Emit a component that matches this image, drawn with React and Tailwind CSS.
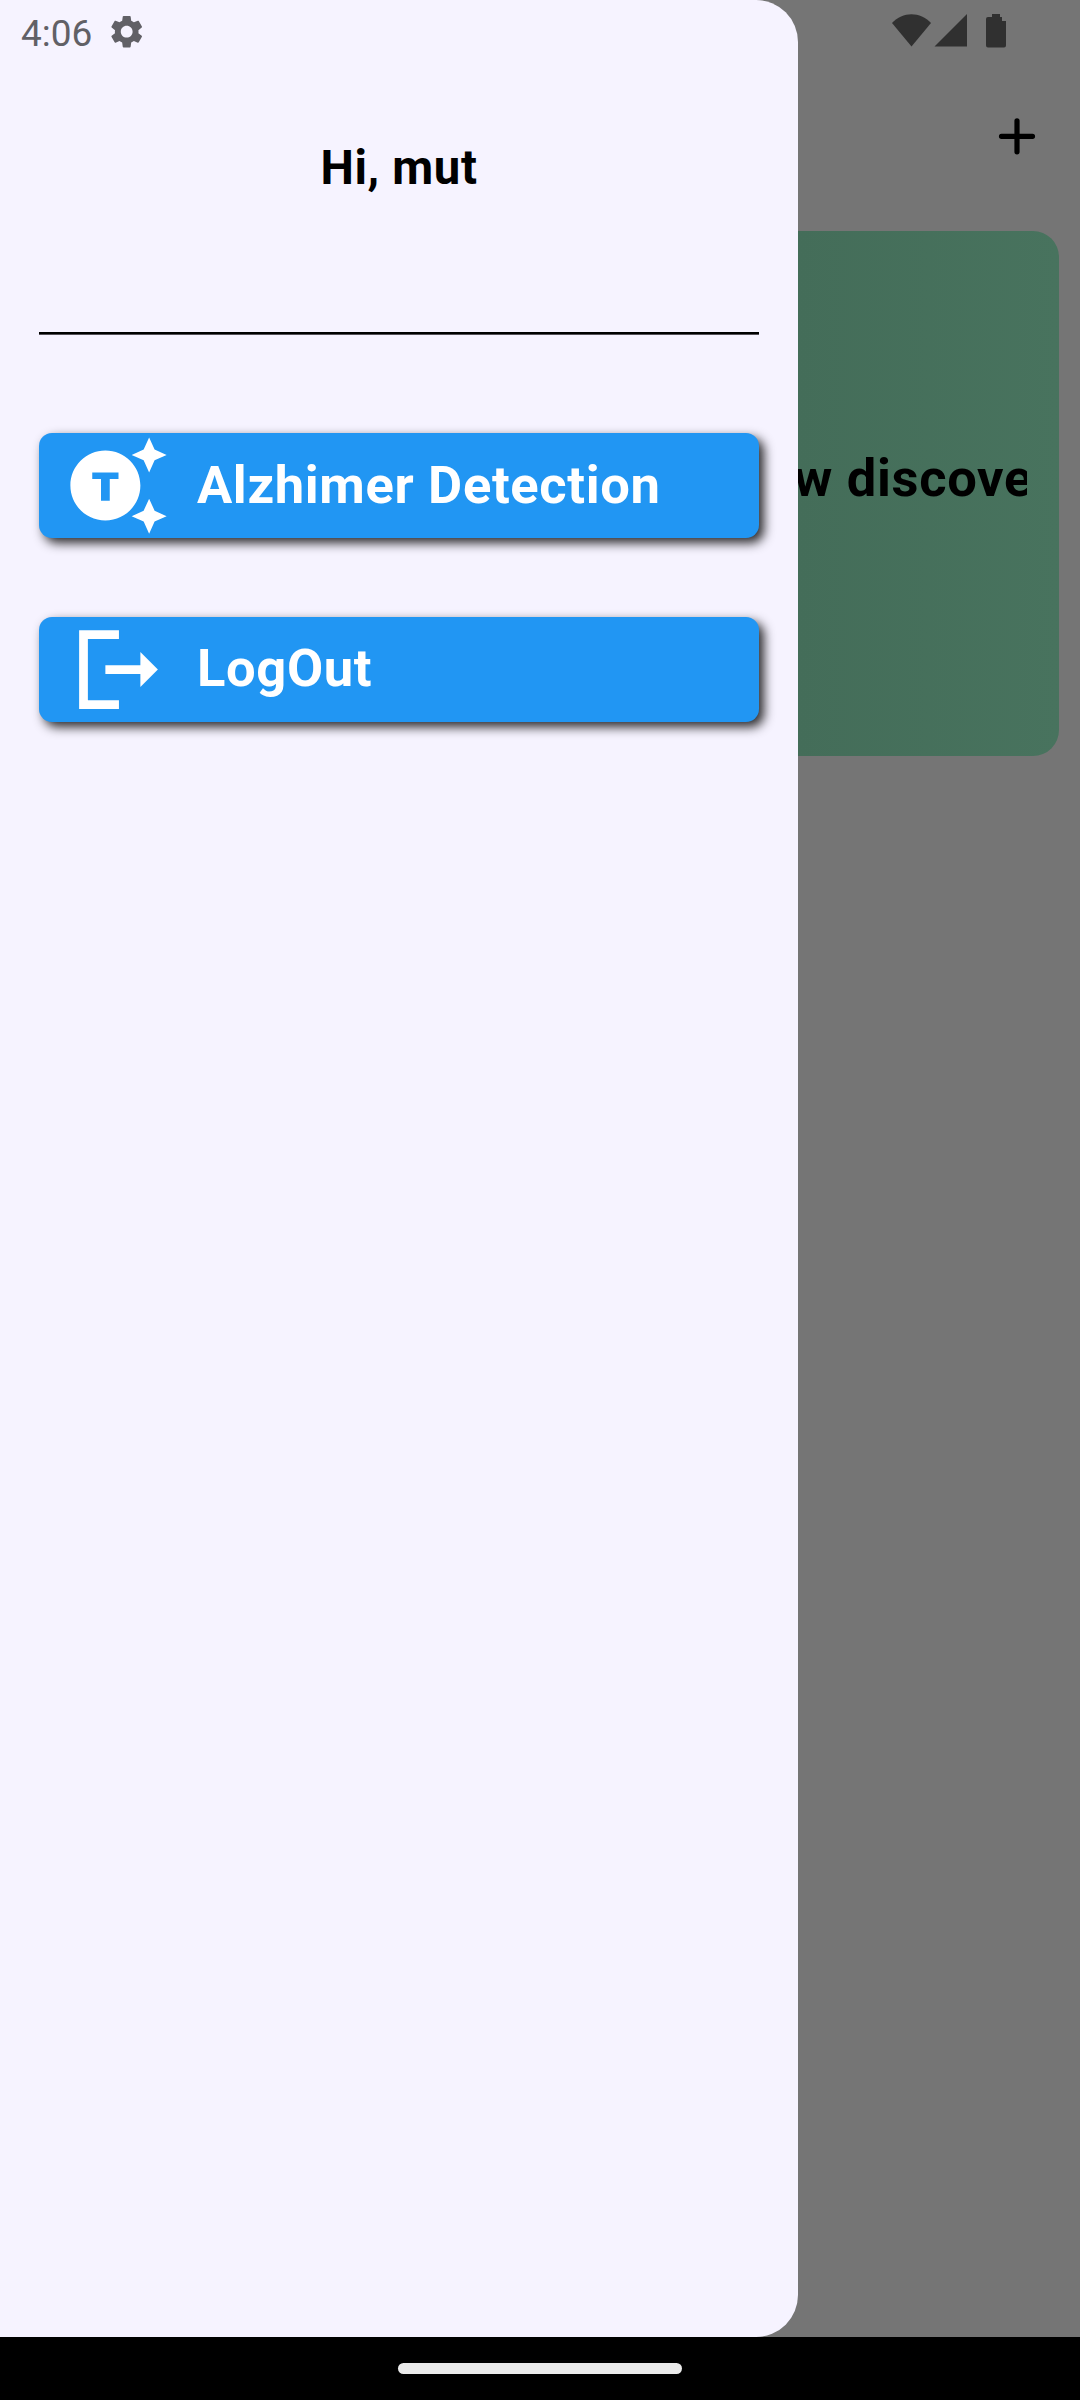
function SettingsIcon() {
  return (
    <svg viewBox="0 0 24 24" className="h-[39.4px] w-[39.4px]" fill="#616066">
      <path d="M19.14 12.94c.04-.3.06-.61.06-.94 0-.32-.02-.64-.07-.94l2.03-1.58c.18-.14.23-.41.12-.61l-1.92-3.32c-.12-.22-.37-.29-.59-.22l-2.39.96c-.5-.38-1.03-.7-1.62-.94l-.36-2.54c-.04-.24-.24-.41-.48-.41h-3.84c-.24 0-.43.17-.47.41l-.36 2.54c-.59.24-1.13.57-1.62.94l-2.39-.96c-.22-.08-.47 0-.59.22L2.74 8.87c-.12.21-.08.47.12.61l2.03 1.58c-.05.3-.09.63-.09.94s.02.64.07.94l-2.03 1.58c-.18.14-.23.41-.12.61l1.92 3.32c.12.22.37.29.59.22l2.39-.96c.5.38 1.03.7 1.62.94l.36 2.54c.05.24.24.41.48.41h3.84c.24 0 .44-.17.47-.41l.36-2.54c.59-.24 1.13-.56 1.62-.94l2.39.96c.22.08.47 0 .59-.22l1.92-3.32c.12-.22.07-.47-.12-.61l-2.01-1.58zM12 15.6c-1.98 0-3.6-1.62-3.6-3.6s1.62-3.6 3.6-3.6 3.6 1.62 3.6 3.6-1.62 3.6-3.6 3.6z" />
    </svg>
  );
}

function TokensIcon() {
  return (
    <svg viewBox="0 0 24 24" className="h-[105px] w-[105px] shrink-0" fill="#fff">
      <path d="M9 4c-4.42 0-8 3.58-8 8s3.58 8 8 8 8-3.58 8-8-3.58-8-8-8zm3 6.5h-2v5H8v-5H6V9h6v1.5zM20.25 3.75L23 5l-2.75 1.25L19 9l-1.25-2.75L15 5l2.75-1.25L19 1l1.25 2.75zM20.25 17.75L23 19l-2.75 1.25L19 23l-1.25-2.75L15 19l2.75-1.25L19 15l1.25 2.75z" />
    </svg>
  );
}

function LogoutIcon() {
  return (
    <svg viewBox="0 0 24 24" className="h-[105px] w-[105px] shrink-0" fill="#fff">
      <path d="M3 3h9.1v2H5v14h7.1v2H3zM9 11h8V8l4 4-4 4v-3H9z" />
    </svg>
  );
}

function StatusIcons() {
  return (
    <svg viewBox="0 0 116 36" className="h-9 w-[116px]" fill="#303030">
      <path d="M0 10C10.500-1.700 28.500-1.700 39 10L19.500 33.500z" />
      <path d="M42.500 33.500L75 1v32.500z" />
      <path d="M100 1h8v3h2v4h4v24.500q0 2-2 2H96q-2 0-2-2V6q0-2 2-2h4z" />
    </svg>
  );
}

function MenuButton({ icon, label, labelClass = "" }) {
  return (
    <button className="flex h-[105px] w-full items-center gap-[26.25px] rounded-[13px] bg-[#2196f3] px-[26.25px] text-[52.5px] leading-none font-bold whitespace-nowrap text-white shadow-[5px_5px_11px_#000000d4]">
      {icon}
      <span className={`tracking-[0.66px] ${labelClass}`}>{label}</span>
    </button>
  );
}

export default function App() {
  return (
    <div className="flex h-[2400px] w-[1080px] flex-col overflow-hidden bg-black font-[Roboto,sans-serif]">
      <div className="flex h-[2337px] bg-[#757575]">
        <aside className="flex w-[798px] shrink-0 flex-col rounded-r-[42px] bg-[#f6f3ff] px-[39.4px]">
          <div className="-ml-[18.4px] flex h-[63px] items-center gap-[15px]">
            <span className="mt-1 text-[37px] leading-none text-[#616066]">4:06</span>
            <SettingsIcon />
          </div>
          <h1 className="mt-[77px] text-center text-[47.25px] leading-[56px] font-bold tracking-[0.66px] text-black">Hi, mut</h1>
          <div className="mt-[136px] h-[3px] border-b border-[#555158] bg-black" />
          <nav className="mt-[98px] flex flex-col gap-[79px]">
            <MenuButton icon={<TokensIcon />} label="Alzhimer Detection" />
            <MenuButton icon={<LogoutIcon />} label="LogOut" labelClass="pb-0.5" />
          </nav>
        </aside>
        <main className="flex-1">
          <div className="flex h-[63px] items-start pt-[13px] pl-[94px]">
            <StatusIcons />
          </div>
          <div className="flex h-[168px] justify-end pt-[52px] pr-[42px]">
            <svg viewBox="0 0 42 42" className="h-[42px] w-[42px]" stroke="#000" strokeWidth="5.2" strokeLinecap="round">
              <path d="M5.500 21.300H36.500M21 5.800V36.800" />
            </svg>
          </div>
          <section className="flex h-[525px] w-[261px] rounded-r-[26px] bg-linear-to-r from-[#446d59] to-[#48735e] pt-[210px]">
            <div className="flex h-[74px] w-[229px] justify-end overflow-hidden">
              <span className="-mr-[6px] text-[52.5px] leading-[74px] font-bold tracking-[0.66px] whitespace-nowrap text-black">w discove</span>
            </div>
          </section>
        </main>
      </div>
      <footer className="flex h-[63px] items-center justify-center">
        <div className="h-[11px] w-[284px] rounded-full bg-[#ebebeb]" />
      </footer>
    </div>
  );
}
